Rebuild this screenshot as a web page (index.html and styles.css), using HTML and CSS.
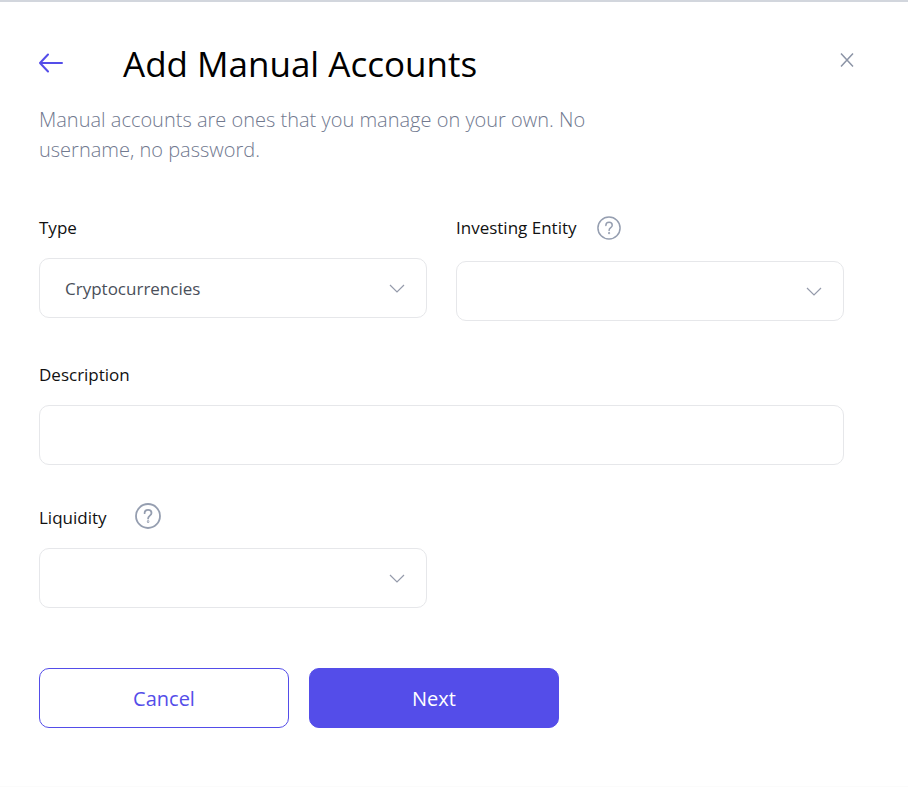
FILE: index.html
```
<!DOCTYPE html>
<html lang="en">
    <head>
        <meta charset="utf-8">
        <meta name="viewport" content="width=device-width, initial-scale=1">
        <title>Add Manual Accounts</title>
        <link rel="stylesheet" href="styles.css">
    </head>
    <body>
        <main class="dialog">
            <header class="dialog_header">
                <button class="icon_button back_button" type="button" aria-label="Back">
                    <svg width="24" height="20" viewBox="0 0 24 20" fill="none" stroke="#544de9" stroke-width="2" stroke-linecap="round" stroke-linejoin="round"><path d="M9 1.5L1 10l8 8.5M1 10h22"/></svg>
                </button>
                <h1 class="title">Add Manual Accounts</h1>
                <button class="icon_button close_button" type="button" aria-label="Close">
                    <svg width="14" height="14" viewBox="0 0 14 14" fill="none" stroke="#8c94a6" stroke-width="1.5"><path d="M1 .5l12 13M13 .5l-12 13"/></svg>
                </button>
            </header>
            <p class="intro">Manual accounts are ones that you manage on your own. No username, no password.</p>

            <form class="account_form">
                <div class="field">
                    <div class="label_row">
                        <label for="type">Type</label>
                    </div>
                    <select class="control" id="type">
                        <option>Cryptocurrencies</option>
                    </select>
                </div>
                <div class="field">
                    <div class="label_row entity_row">
                        <label for="entity">Investing Entity</label>
                        <button class="icon_button" type="button" aria-label="About investing entity">
                            <svg width="24" height="24" viewBox="0 0 26 26" fill="none" stroke="#959eb0" stroke-width="1.6" stroke-linecap="round"><circle cx="13" cy="13" r="12"/><path d="M9.6 10.2c0-2 1.5-3.4 3.5-3.4s3.4 1.3 3.4 3.1c0 2.8-3.4 2.7-3.4 5.7"/><circle cx="13.1" cy="18.6" r=".4"/></svg>
                        </button>
                    </div>
                    <select class="control" id="entity">
                        <option></option>
                    </select>
                </div>
                <div class="field wide">
                    <div class="label_row">
                        <label for="description">Description</label>
                    </div>
                    <input class="control" id="description" type="text">
                </div>
                <div class="field">
                    <div class="label_row liquidity_row">
                        <label for="liquidity">Liquidity</label>
                        <button class="icon_button" type="button" aria-label="About liquidity">
                            <svg width="26" height="26" viewBox="0 0 26 26" fill="none" stroke="#959eb0" stroke-width="1.8" stroke-linecap="round"><circle cx="13" cy="13" r="12"/><path d="M9.6 10.2c0-2 1.5-3.4 3.5-3.4s3.4 1.3 3.4 3.1c0 2.8-3.4 2.7-3.4 5.7"/><circle cx="13.1" cy="18.6" r=".4"/></svg>
                        </button>
                    </div>
                    <select class="control" id="liquidity">
                        <option></option>
                    </select>
                </div>
                <div class="actions wide">
                    <button class="button" type="button">Cancel</button>
                    <button class="button primary" type="submit">Next</button>
                </div>
            </form>
        </main>
    </body>
</html>
```

FILE: styles.css
```
* {
    box-sizing: border-box;
}

body {
    margin: 0;
    background: #fbfbfb;
    font-family: "Open Sans", "Noto Sans", sans-serif;
    font-size: 17px;
    color: #111111;
}

.dialog {
    padding: 40px 54px 58px 39px;
    border-top: 2px solid #d2d6dd;
    background: #ffffff;
}

.dialog_header {
    display: flex;
    align-items: center;
    gap: 60px;
}

.icon_button {
    display: flex;
    padding: 0;
    border: none;
    background: none;
    cursor: pointer;
}

.back_button {
    padding-bottom: 2px;
}

.close_button {
    margin-left: auto;
    padding-bottom: 8px;
}

.title {
    margin: 0;
    font-size: 35px;
    font-weight: 400;
    line-height: 44px;
    color: #000000;
}

.intro {
    max-width: 580px;
    margin: 19px 0 51px;
    font-size: 20px;
    font-weight: 300;
    line-height: 30px;
    color: #71798f;
}

.account_form {
    display: grid;
    grid-template-columns: 1fr 1fr;
    column-gap: 29px;
    padding-right: 10px;
}

.wide {
    grid-column: 1 / -1;
}

.field {
    margin-bottom: 38px;
}

.field.wide {
    padding-top: 4px;
}

.label_row {
    display: flex;
    margin-bottom: 18px;
    line-height: 24px;
}

.entity_row {
    gap: 20px;
    padding-bottom: 3px;
}

.liquidity_row {
    align-items: flex-start;
    gap: 28px;
    height: 27px;
}

.liquidity_row label {
    align-self: flex-end;
}

.control {
    display: block;
    width: 100%;
    height: 60px;
    padding: 0 60px 0 25px;
    border: 1px solid #e6e7ea;
    border-radius: 10px;
    background: #ffffff;
    font: inherit;
    color: #4a4f5a;
}

select.control {
    appearance: none;
    background: #ffffff url("data:image/svg+xml,%3Csvg xmlns='http://www.w3.org/2000/svg' width='16' height='10' fill='none' stroke='%23959bab' stroke-width='1.2'%3E%3Cpath d='M1 2l7 7 7-7'/%3E%3C/svg%3E") no-repeat right 21px center;
}

.actions {
    display: flex;
    gap: 20px;
    padding-top: 22px;
}

.button {
    width: 250px;
    height: 60px;
    border: 1px solid #544de9;
    border-radius: 10px;
    background: #ffffff;
    font: inherit;
    font-size: 20px;
    color: #544de9;
    cursor: pointer;
}

.primary {
    background: #544de9;
    color: #ffffff;
}
```
